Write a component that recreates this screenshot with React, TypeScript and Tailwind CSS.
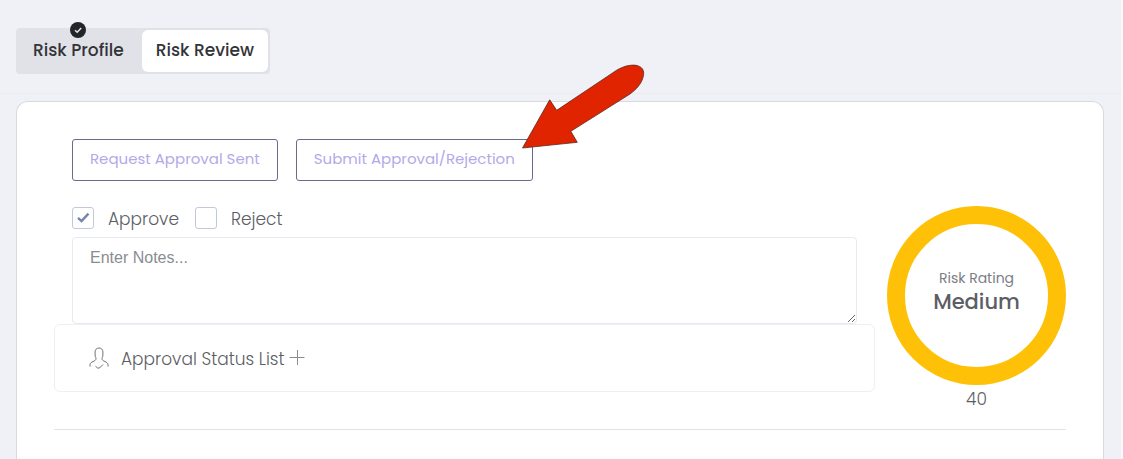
import { useState } from "react"

const tabs = [
  { label: "Risk Profile", done: true },
  { label: "Risk Review", done: false },
]

const outlineButton =
  "h-[42px] rounded-[3px] border border-[#6f6a87] bg-white px-[17px] pb-0.5 text-[15px] font-normal text-[#b4a9e8]"

function DoneIcon() {
  return (
    <svg viewBox="0 0 16 16" className="absolute -top-2 left-1/2 size-4 -translate-x-1/2" aria-hidden="true">
      <circle cx="8" cy="8" r="8" fill="#212529" />
      <path d="M5 8.2l2.2 2.1 4-4.2" fill="none" stroke="#e3e4e8" strokeWidth="1.5" />
    </svg>
  )
}

function PersonIcon() {
  return (
    <svg viewBox="0 0 20 22" className="h-[22px] w-5" fill="none" stroke="#6f7177" strokeWidth="1" aria-hidden="true">
      <path d="M1 19.500v-1.700c0-1.300.6-2 1.800-2.600l2.700-1.400c1-.5 1.500-1.200 1.500-2.200 0-1.200-.9-1.600-.9-3.600V5c0-2.400 1.500-4 3.900-4s3.900 1.600 3.900 4v3c0 2-.9 2.400-.9 3.600 0 1 .5 1.700 1.500 2.200l2.700 1.400c1.200.6 1.800 1.300 1.800 2.600v1.700" />
      <path d="M6.500 19.200l2 1.800h2l3.500-3.500" />
    </svg>
  )
}

function Checkbox({ label, checked, onChange }: { label: string; checked: boolean; onChange: () => void }) {
  return (
    <label className="flex h-[22px] items-center gap-3.5">
      <span className="relative flex">
        <input
          type="checkbox"
          checked={checked}
          onChange={onChange}
          className="size-[22px] appearance-none rounded-[3px] border border-[#c3c9dc] bg-white"
        />
        {checked && (
          <svg viewBox="0 0 22 22" className="pointer-events-none absolute inset-0" aria-hidden="true">
            <path d="M6 10.800l3.500 3.300 7-7.500" fill="none" stroke="#7485ad" strokeWidth="2.400" />
          </svg>
        )}
      </span>
      <span className="pt-0.5 leading-5">{label}</span>
    </label>
  )
}

export default function App() {
  const [tab, setTab] = useState("Risk Review")
  const [decision, setDecision] = useState("Approve")
  const [listOpen, setListOpen] = useState(false)

  return (
    <div className="flex min-h-screen flex-col border-r-2 border-[#f8f9fc] bg-[#f0f1f7] font-[Poppins,Inter,sans-serif] text-[17px] font-light text-[#5c5e65]">

      {/* Tabs */}
      <header className="flex border-b border-[#ebecf1] px-4 pt-7 pb-[19px]">
        <nav className="flex gap-[3px] rounded bg-[#e1e2e7] p-0.5">
          {tabs.map((t) => (
            <button
              key={t.label}
              onClick={() => setTab(t.label)}
              className={
                tab === t.label
                  ? "h-[42px] rounded-md bg-white px-3.5 font-medium text-[#333437]"
                  : "relative h-[42px] px-[15px] font-medium text-[#333437]"
              }
            >
              {t.done && <DoneIcon />}
              {t.label}
            </button>
          ))}
        </nav>
      </header>

      {/* Review card */}
      <main className="mr-[17px] ml-4 mt-[7px] flex-1 rounded-t-xl border border-b-0 border-[#d9dadd] bg-white px-[37px] pt-[37px]">
        <div className="flex gap-[18px] pl-[18px]">
          <button className={outlineButton}>Request Approval Sent</button>
          <div className="relative">
            <button className={outlineButton}>Submit Approval/Rejection</button>
            <svg
              viewBox="0 0 128 90"
              className="pointer-events-none absolute right-[-115px] bottom-[29px] h-[90px] w-32"
              aria-hidden="true"
            >
              <path
                d="M2.500 86L29.700 37.800l7 10.500L94 10c7-5 16-8 23-6.500 7 2 7.500 7 6 12-2 7-7 12-13 16.500L50.800 69.300l6.500 11z"
                fill="#e12400"
                stroke="#5b2a20"
                strokeWidth="0.800"
              />
            </svg>
          </div>
        </div>

        <div className="mt-[25px] flex items-start gap-3 border-b border-[#e1e2e5] pb-[18px]">
          <div className="flex-1 pt-px">
            <div className="px-[18px]">
              <div className="mb-2 flex gap-4">
                {["Approve", "Reject"].map((d) => (
                  <Checkbox key={d} label={d} checked={decision === d} onChange={() => setDecision(d)} />
                ))}
              </div>
              <textarea
                aria-label="Notes"
                placeholder="Enter Notes..."
                className="block h-[87px] w-full rounded border border-[#e8e9f1] px-[17px] py-2 font-['Liberation_Sans',sans-serif] text-base font-normal placeholder:text-[#8a8c92]"
              />
            </div>
            <section className="flex h-[68px] items-center rounded-md border border-[#eeeff5] px-[34px]">
              <PersonIcon />
              <span className="ml-3 pt-1">Approval Status List</span>
              <button
                aria-label="Toggle approval status list"
                aria-expanded={listOpen}
                onClick={() => setListOpen(!listOpen)}
                className="ml-1"
              >
                <svg viewBox="0 0 16 16" className="size-4" stroke="#8b8d92" aria-hidden="true">
                  <path d="M8.500 0v15M0.500 7.500h15" />
                </svg>
              </button>
            </section>
          </div>

          {/* Rating */}
          <div className="flex flex-col items-center">
            <div className="flex size-[179px] flex-col items-center justify-center rounded-full border-[18px] border-[#ffc107] pb-2">
              <span className="text-sm leading-5 font-normal text-[#7c7e84]">Risk Rating</span>
              <span className="text-[21px] leading-7 font-medium text-[#5c5e66]">Medium</span>
            </div>
            <span className="mt-0.5 leading-6">40</span>
          </div>
        </div>
      </main>
    </div>
  )
}
